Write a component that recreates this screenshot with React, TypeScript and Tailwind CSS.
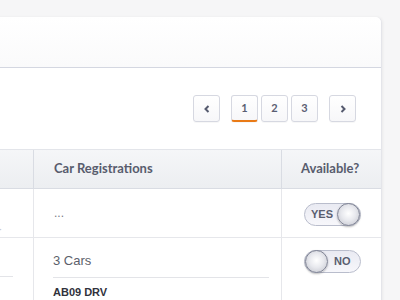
import React from "react";

const PageButton = ({ children, active }: { children: React.ReactNode; active?: boolean }) => (
  <button
    className={
      "relative flex h-[27px] w-[27px] items-center justify-center rounded-[3px] border border-[#d6d8e1] bg-gradient-to-b from-white to-[#f7f7f9] text-[11px] font-bold text-[#5a5e72] shadow-[0_1px_0_rgba(0,0,0,0.03)]" +
      (active ? " border-b-[#e97a16] border-b-2" : "")
    }
  >
    {children}
  </button>
);

const Chevron = ({ dir }: { dir: "left" | "right" }) => (
  <svg width="6" height="8" viewBox="0 0 6 8">
    <path
      d={dir === "left" ? "M4.5 1 L1.5 4 L4.5 7" : "M1.5 1 L4.5 4 L1.5 7"}
      fill="none"
      stroke="#555a6e"
      strokeWidth="2"
    />
  </svg>
);

const Toggle = ({ on }: { on: boolean }) => {
  const knob = (
    <span className="h-[23px] w-[23px] shrink-0 rounded-full border border-[#7f8394] bg-[radial-gradient(circle_at_50%_45%,#ffffff_0%,#e8e9ee_45%,#bfc1ca_100%)] shadow-[0_1px_2px_rgba(0,0,0,0.25)]" />
  );
  return (
    <div className="flex h-[23px] w-[57px] items-center rounded-full border border-[#b9bdcc] bg-gradient-to-b from-[#e9eaf2] to-[#f7f7fb] text-[11px] font-bold text-[#5a5e70] [font-family:'Liberation_Sans',Arial,sans-serif]">
      {on ? (
        <>
          <span className="flex-1 pl-[6px]">YES</span>
          {knob}
        </>
      ) : (
        <>
          {knob}
          <span className="flex-1 pl-[6px]">NO</span>
        </>
      )}
    </div>
  );
};

export default function App() {
  return (
    <div className="h-[300px] w-[400px] overflow-hidden bg-[#f6f6f7] pt-[17px] [font-family:Lato,'Open_Sans',sans-serif]">
      <div className="ml-[-20px] w-[402px] overflow-hidden rounded-tr-[6px] border-r border-[#e4e5ea] bg-white shadow-[1px_0_3px_rgba(0,0,0,0.05)]">
        {/* header */}
        <div className="h-[51px] border-b border-[#d4d7e1] bg-gradient-to-b from-white to-[#fafafb]" />
        {/* toolbar */}
        <div className="flex h-[81px] items-start justify-end pr-[25px] pt-[27px]">
          <PageButton>
            <Chevron dir="left" />
          </PageButton>
          <div className="ml-[11px] flex gap-[3px]">
            <PageButton active>1</PageButton>
            <PageButton>2</PageButton>
            <PageButton>3</PageButton>
          </div>
          <div className="ml-[11px]">
            <PageButton>
              <Chevron dir="right" />
            </PageButton>
          </div>
        </div>
        {/* table */}
        <div className="grid grid-cols-[54px_248px_100px] border-t border-[#e3e5ea]">
          <div className="h-[39px] border-b border-r border-[#d9dce3] bg-gradient-to-b from-[#f5f6f8] to-[#eceef1]" />
          <div className="flex h-[39px] items-center border-b border-r border-[#d9dce3] bg-gradient-to-b from-[#f5f6f8] to-[#eceef1] pl-[20px] text-[13px] font-bold text-[#585c6d]">
            Car Registrations
          </div>
          <div className="flex h-[39px] items-center border-b border-[#d9dce3] bg-gradient-to-b from-[#f5f6f8] to-[#eceef1] pl-[19px] text-[13px] font-bold text-[#585c6d]">
            Available?
          </div>

          <div className="h-[49px] border-b border-r border-[#e6e7eb]">
            <div className="pl-[19px] pt-[34px] text-[10px] leading-none text-[#c9cad1]">·</div>
          </div>
          <div className="flex h-[49px] items-center border-b border-r border-[#e6e7eb] pl-[20px] text-[12px] text-[#777a86] [font-family:'Liberation_Sans',Arial,sans-serif]">
            ...
          </div>
          <div className="flex h-[49px] items-center border-b border-[#e6e7eb] pl-[22px] pt-[2px]">
            <Toggle on />
          </div>

          <div className="h-[70px] border-r border-[#e6e7eb] pl-[20px] pt-[38px]">
            <div className="border-b border-[#e3e4e8] w-[13px]" />
          </div>
          <div className="h-[70px] border-r border-[#e6e7eb] pl-[19px] pr-[12px] pt-[14px] [font-family:'Liberation_Sans',Arial,sans-serif]">
            <div className="border-b border-[#e3e4e8] pb-[7px] text-[13px] leading-[18px] text-[#5c5f6b]">3 Cars</div>
            <div className="pt-[6px] text-[11px] font-bold text-[#30323c]">AB09 DRV</div>
          </div>
          <div className="h-[70px] pl-[22px] pt-[12px]">
            <Toggle on={false} />
          </div>
        </div>
      </div>
    </div>
  );
}
